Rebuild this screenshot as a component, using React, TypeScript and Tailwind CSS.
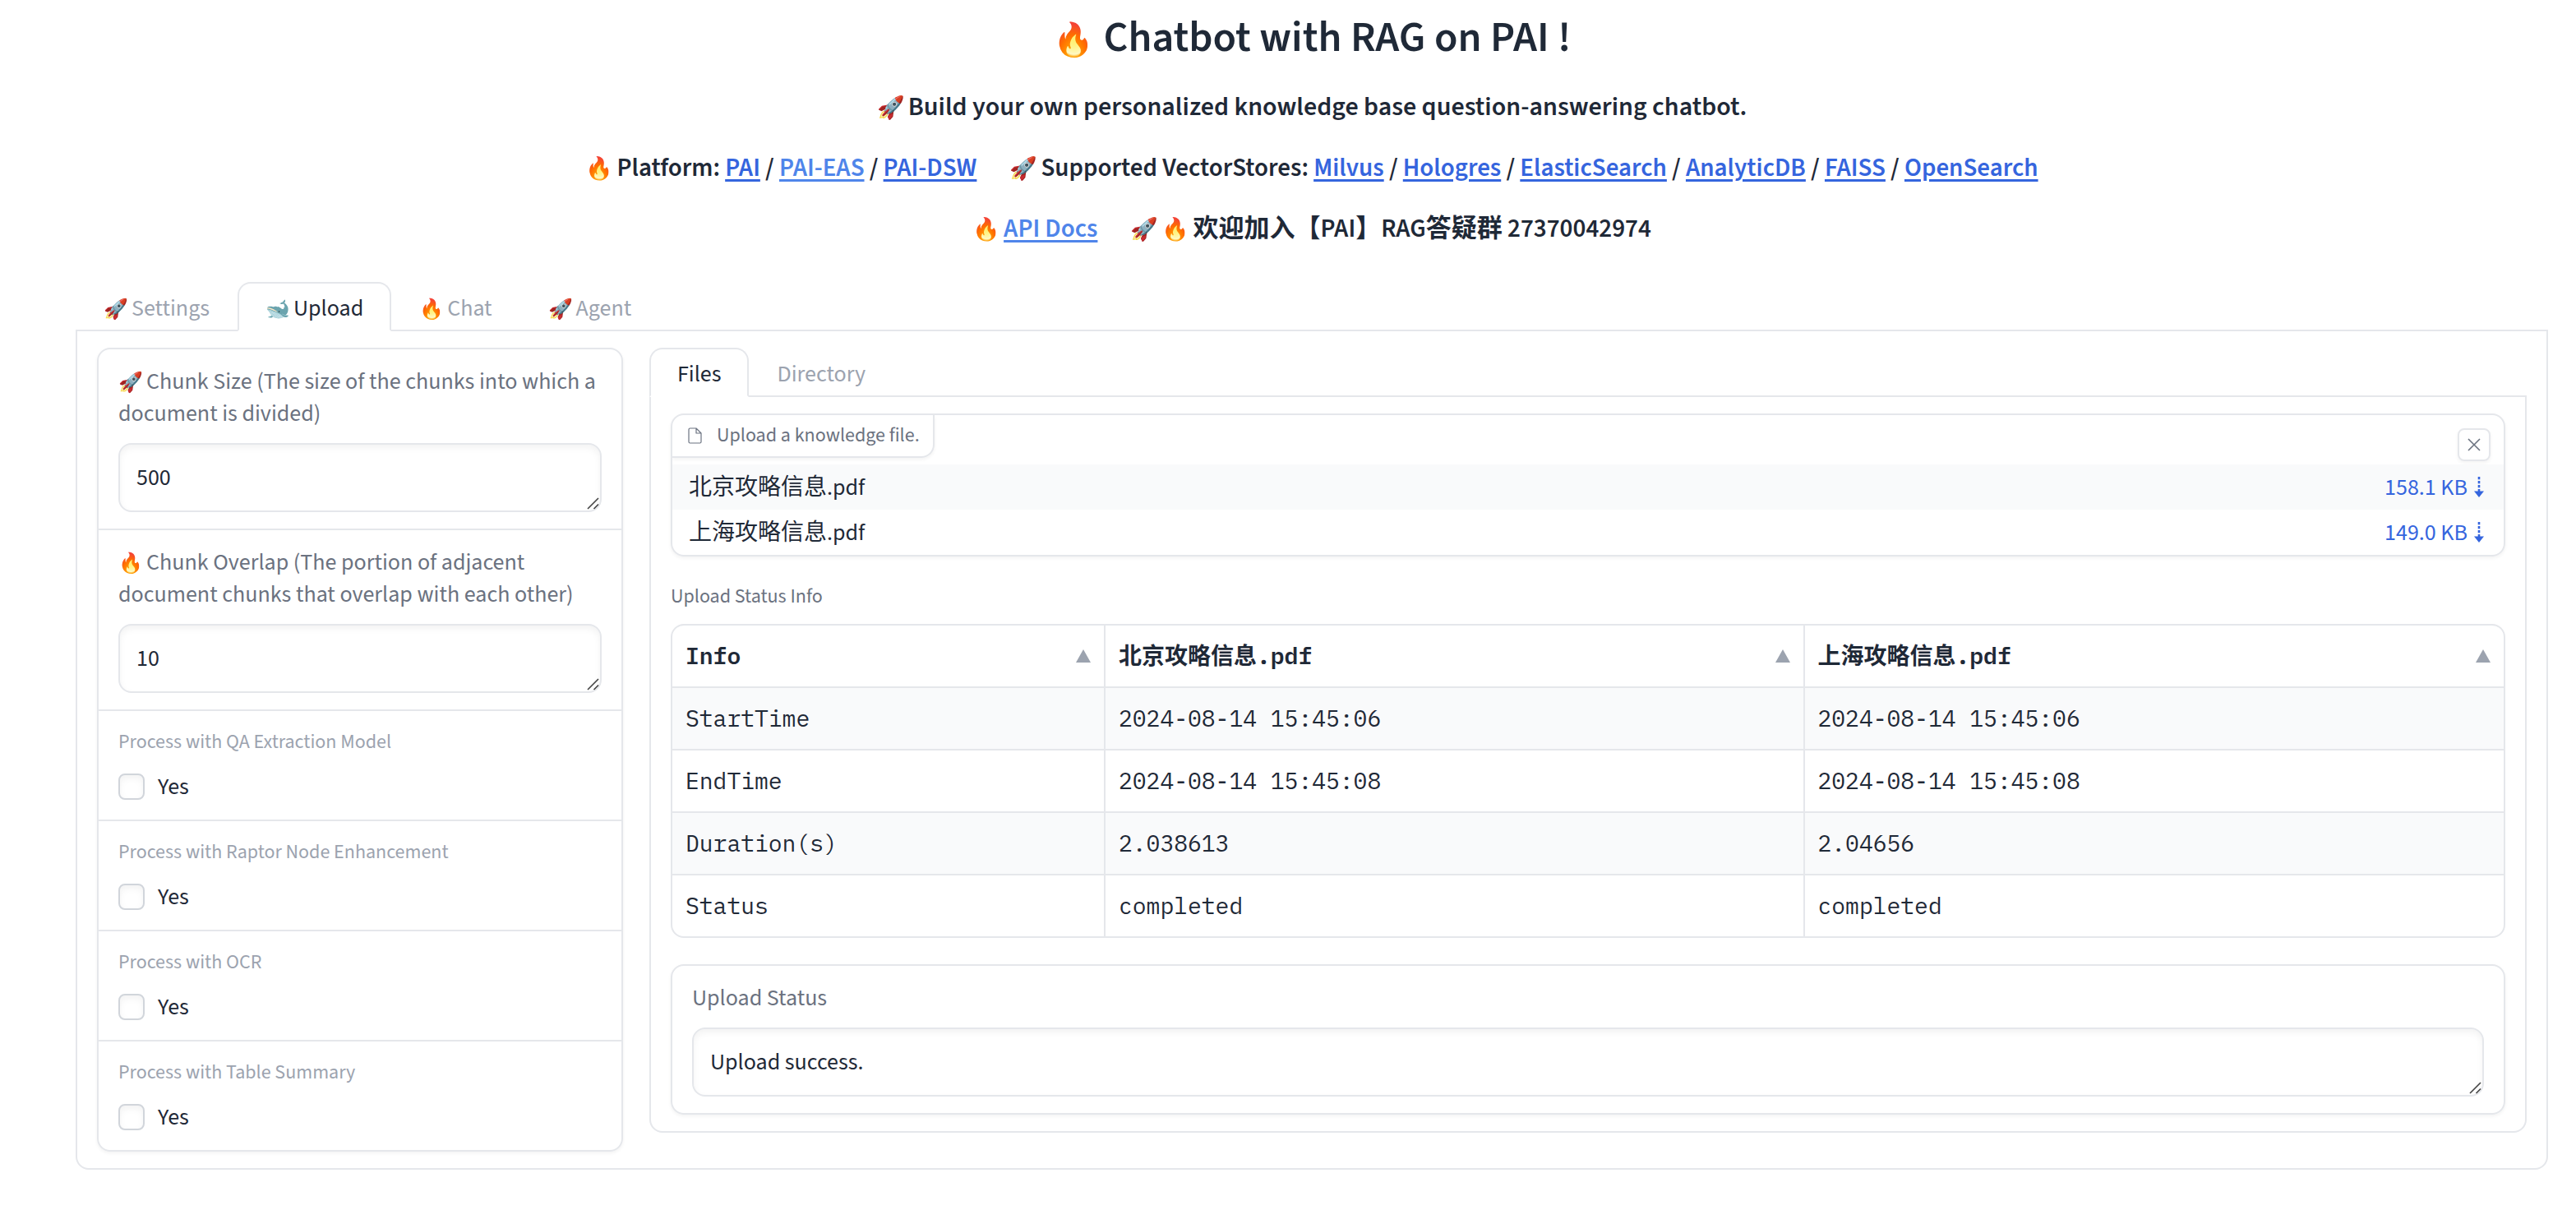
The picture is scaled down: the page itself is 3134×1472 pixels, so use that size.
import type { ReactNode } from "react";

function Emoji({ children, size = "text" }: { children: ReactNode; size?: "text" | "heading" | "title" }) {
  const sizes = {
    text: "mr-1 text-[24px] leading-none font-normal",
    heading: "mr-1 text-[27px] leading-none font-normal",
    title: "mr-3 text-[40px] leading-none font-normal",
  };
  return <span className={sizes[size]}>{children}</span>;
}

function DocLink({ children, visited }: { children: ReactNode; visited?: boolean }) {
  return (
    <a
      href="#"
      className={
        visited
          ? "text-[#4f85ea] underline decoration-[3px] underline-offset-4"
          : "text-[#3565de] underline decoration-[3px] underline-offset-4"
      }
    >
      {children}
    </a>
  );
}

function Tab({ children, active }: { children: ReactNode; active?: boolean }) {
  return (
    <button
      type="button"
      role="tab"
      aria-selected={!!active}
      className={
        active
          ? "-mb-0.5 h-[60px] rounded-t-2xl border-2 border-[#e5e7eb] border-b-white bg-white px-8 pt-1 whitespace-nowrap text-[#1f2937]"
          : "-mb-0.5 h-[60px] border-2 border-transparent px-8 pt-1 whitespace-nowrap text-[#9ca3af]"
      }
    >
      {children}
    </button>
  );
}

function TextArea({ id, value }: { id: string; value: string }) {
  return (
    <div className="relative">
      <textarea
        id={id}
        defaultValue={value}
        rows={1}
        className="block h-[84px] w-full resize-none overflow-hidden rounded-2xl border-2 border-[#e5e7eb] bg-white px-5 py-5 leading-10 text-[#1f2937] shadow-[inset_0_4px_8px_0_rgba(0,0,0,0.05)] outline-none"
      />
      <svg
        className="pointer-events-none absolute right-0.5 bottom-0.5 h-4 w-4"
        viewBox="0 0 16 16"
        fill="none"
        stroke="#444"
        strokeWidth="1.6"
        aria-hidden="true"
      >
        <path d="M1 14 L14 1 M8.5 14 L14 8.5" />
      </svg>
    </div>
  );
}

function NumberBlock({ id, emoji, label, value }: { id: string; emoji: string; label: string; value: string }) {
  return (
    <div className="border-b-2 border-[#e5e7eb] px-6 py-5">
      <label htmlFor={id} className="mb-4 block leading-[39px] text-[#6b7280]">
        <Emoji>{emoji}</Emoji>
        {label}
      </label>
      <TextArea id={id} value={value} />
    </div>
  );
}

function CheckBlock({ id, label }: { id: string; label: string }) {
  return (
    <div
      role="group"
      aria-labelledby={id}
      className="border-b-2 border-[#e5e7eb] px-6 pt-[22px] pb-6 last:border-b-0"
    >
      <div id={id} className="mb-[22px] text-2xl leading-8 text-[#9ca3af]">
        {label}
      </div>
      <label className="flex w-fit items-center gap-4 leading-8 text-[#1f2937]">
        <input
          type="checkbox"
          className="h-8 w-8 appearance-none rounded-lg border-2 border-[#d1d5db] bg-white shadow-[inset_0_4px_8px_0_rgba(0,0,0,0.05)]"
        />
        Yes
      </label>
    </div>
  );
}

function FileRow({ name, size }: { name: string; size: string }) {
  return (
    <li className="flex h-[55px] items-center justify-between pr-6 pl-5 odd:bg-[#f9fafb]">
      <span className="text-[#1f2937]">{name}</span>
      <a href="#" className="flex items-center gap-2 text-[#3565de]">
        {size}
        <svg width="12" height="26" viewBox="0 0 12 26" aria-hidden="true">
          <path d="M6 0 V18" stroke="#3565de" strokeWidth="2.6" strokeDasharray="3.2 1.8" />
          <path d="M0 17.5 H12 L6 25 Z" fill="#3565de" />
        </svg>
      </a>
    </li>
  );
}

const columns = ["Info", "北京攻略信息.pdf", "上海攻略信息.pdf"];
const rows = [
  ["StartTime", "2024-08-14 15:45:06", "2024-08-14 15:45:06"],
  ["EndTime", "2024-08-14 15:45:08", "2024-08-14 15:45:08"],
  ["Duration(s)", "2.038613", "2.04656"],
  ["Status", "completed", "completed"],
];

const checks = [
  { id: "qa-extraction", label: "Process with QA Extraction Model" },
  { id: "raptor", label: "Process with Raptor Node Enhancement" },
  { id: "ocr", label: "Process with OCR" },
  { id: "table-summary", label: "Process with Table Summary" },
];

export default function App() {
  return (
    <div className="min-h-screen bg-white pr-[34px] pb-[50px] pl-[92px] font-['Source_Sans_3','Noto_Sans_CJK_SC',sans-serif] text-[28px] leading-10 text-[#1f2937]">
      <header className="flex flex-col items-center text-[31px] leading-10 font-semibold">
        <h1 className="pt-3.5 text-[52px] leading-16">
          <Emoji size="title">🔥</Emoji>
          Chatbot with RAG on PAI !
        </h1>
        <p className="mt-8 text-[32px]">
          <Emoji size="heading">🚀</Emoji>
          Build your own personalized knowledge base question-answering chatbot.
        </p>
        <p className="mt-[34px] flex gap-10">
          <span>
            <Emoji size="heading">🔥</Emoji>
            Platform: <DocLink>PAI</DocLink> / <DocLink visited>PAI-EAS</DocLink> / <DocLink>PAI-DSW</DocLink>
          </span>
          <span>
            <Emoji size="heading">🚀</Emoji>
            Supported VectorStores: <DocLink>Milvus</DocLink> / <DocLink>Hologres</DocLink> /{" "}
            <DocLink>ElasticSearch</DocLink> / <DocLink>AnalyticDB</DocLink> / <DocLink>FAISS</DocLink> /{" "}
            <DocLink>OpenSearch</DocLink>
          </span>
        </p>
        <p className="mt-[34px] flex gap-10">
          <span>
            <Emoji size="heading">🔥</Emoji>
            <DocLink visited>API Docs</DocLink>
          </span>
          <span>
            <Emoji size="heading">🚀</Emoji>
            <Emoji size="heading">🔥</Emoji>
            欢迎加入【PAI】RAG答疑群 27370042974
          </span>
        </p>
      </header>

      <div role="tablist" className="mt-[45px] flex">
        <Tab>
          <Emoji>🚀</Emoji>Settings
        </Tab>
        <Tab active>
          <Emoji>🐋</Emoji>Upload
        </Tab>
        <Tab>
          <Emoji>🔥</Emoji>Chat
        </Tab>
        <Tab>
          <Emoji>🚀</Emoji>Agent
        </Tab>
      </div>

      <main className="flex items-start gap-8 rounded-b-2xl border-2 border-[#e5e7eb] px-6 py-5">
        <section className="w-[640px] shrink-0 rounded-2xl border-2 border-[#e5e7eb] shadow-[0_2px_4px_0_rgba(0,0,0,0.05)]">
          <NumberBlock
            id="chunk-size"
            emoji="🚀"
            label="Chunk Size (The size of the chunks into which a document is divided)"
            value="500"
          />
          <NumberBlock
            id="chunk-overlap"
            emoji="🔥"
            label="Chunk Overlap (The portion of adjacent document chunks that overlap with each other)"
            value="10"
          />
          {checks.map((c) => (
            <CheckBlock key={c.id} id={c.id} label={c.label} />
          ))}
        </section>

        <section className="min-w-0 flex-1">
          <div role="tablist" className="flex">
            <Tab active>Files</Tab>
            <Tab>Directory</Tab>
          </div>
          <div className="rounded-b-2xl border-2 border-[#e5e7eb] px-6 py-5">
            <div className="overflow-hidden rounded-2xl border-2 border-[#e5e7eb] shadow-[0_2px_4px_0_rgba(0,0,0,0.05)]">
              <div className="flex h-[60px] items-start justify-between">
                <div className="flex h-[52px] items-center gap-4 rounded-br-2xl border-r-2 border-b-2 border-[#e5e7eb] pr-4 pl-[18px] text-2xl text-[#6b7280] shadow-[0_2px_4px_0_rgba(0,0,0,0.05)]">
                  <svg
                    width="20"
                    height="20"
                    viewBox="0 0 20 20"
                    fill="none"
                    stroke="#6b7280"
                    strokeWidth="1.2"
                    strokeLinejoin="round"
                    aria-hidden="true"
                  >
                    <path d="M11 1 H3.5 Q2 1 2 2.5 V17.5 Q2 19 3.5 19 H15.5 Q17 19 17 17.5 V7 Z M11 1 V7 H17" />
                  </svg>
                  Upload a knowledge file.
                </div>
                <button
                  type="button"
                  aria-label="Clear files"
                  className="mt-4 mr-4 flex h-10 w-10 items-center justify-center rounded-lg border-2 border-[#e5e7eb] shadow-[0_2px_4px_0_rgba(0,0,0,0.05)]"
                >
                  <svg width="16" height="16" viewBox="0 0 16 16" stroke="#6b7280" strokeWidth="1.6" aria-hidden="true">
                    <path d="M1 1 L15 15 M15 1 L1 15" />
                  </svg>
                </button>
              </div>
              <ul>
                <FileRow name="北京攻略信息.pdf" size="158.1 KB" />
                <FileRow name="上海攻略信息.pdf" size="149.0 KB" />
              </ul>
            </div>

            <h2 className="mt-8 mb-4 text-2xl leading-[34px] text-[#6b7280]">Upload Status Info</h2>

            <div className="overflow-hidden rounded-2xl border-2 border-[#e5e7eb]">
              <table className="w-full table-fixed border-separate border-spacing-0 font-['IBM_Plex_Mono','Liberation_Mono','Noto_Sans_CJK_SC',monospace]">
                <colgroup>
                  <col className="w-[527px]" />
                  <col />
                  <col />
                </colgroup>
                <thead>
                  <tr>
                    {columns.map((c) => (
                      <th
                        key={c}
                        scope="col"
                        className="h-[76px] border-r-2 border-b-2 border-[#e5e7eb] px-4 py-0 text-left font-semibold last:border-r-0"
                      >
                        <div className="flex items-center justify-between">
                          {c}
                          <svg width="18" height="16" viewBox="0 0 18 16" fill="#9ca3af" aria-hidden="true">
                            <path d="M9 0 L18 16 H0 Z" />
                          </svg>
                        </div>
                      </th>
                    ))}
                  </tr>
                </thead>
                <tbody>
                  {rows.map((r) => (
                    <tr key={r[0]} className="group odd:bg-[#f9fafb]">
                      {r.map((v, i) => (
                        <td
                          key={i}
                          className="h-[76px] border-r-2 border-b-2 border-[#e5e7eb] px-4 py-0 group-last:h-[74px] group-last:border-b-0 last:border-r-0"
                        >
                          {v}
                        </td>
                      ))}
                    </tr>
                  ))}
                </tbody>
              </table>
            </div>

            <div className="mt-8 rounded-2xl border-2 border-[#e5e7eb] px-6 py-5 shadow-[0_2px_4px_0_rgba(0,0,0,0.05)]">
              <label htmlFor="upload-status" className="mb-4 block leading-[39px] text-[#6b7280]">
                Upload Status
              </label>
              <TextArea id="upload-status" value="Upload success." />
            </div>
          </div>
        </section>
      </main>
    </div>
  );
}
